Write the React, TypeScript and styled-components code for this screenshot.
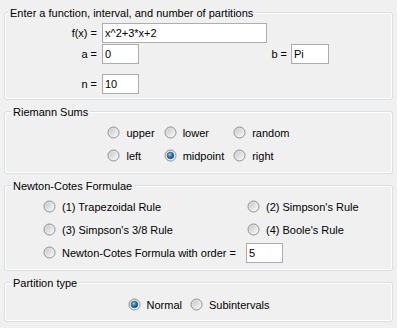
import React, { useId } from "react";
import styled, { createGlobalStyle } from "styled-components";

const GlobalStyle = createGlobalStyle`
	html, body {
		margin: 0;
		padding: 0;
		background: #f0f0f0;
	}
	body {
		font-family: "Liberation Sans", Arial, sans-serif;
		font-size: 11px;
		color: #000;
	}
`;

const Page = styled.div`
	width: 397px;
	height: 328px;
	box-sizing: border-box;
	padding: 12px 4px 0;
	display: flex;
	flex-direction: column;
	gap: 11px;
`;

const Group = styled.div<{ $pb: number }>`
	border: 1px solid #d5dfe5;
	border-radius: 3px;
	box-shadow: inset 0 0 0 1px #fff;
	padding-bottom: ${(p) => p.$pb}px;
`;

const Legend = styled.div<{ $indent: number }>`
	width: fit-content;
	margin: -6px 0 0 ${(p) => p.$indent}px;
	padding: 0 2px;
	background: #f0f0f0;
	line-height: 13px;
	white-space: nowrap;
`;

const FunctionGrid = styled.div`
	display: grid;
	grid-template-columns: 97px 37px 128px 24px 38px;
	grid-template-rows: 20px 20px 8px 20px;
	row-gap: 1px;
	margin-top: 3px;
`;

const Label = styled.span<{ $pr: number; $col: number; $row: number }>`
	grid-column: ${(p) => p.$col};
	grid-row: ${(p) => p.$row};
	align-self: center;
	text-align: right;
	padding-right: ${(p) => p.$pr}px;
	white-space: nowrap;
`;

const TextField = styled.input<{ $col: string; $row: number }>`
	grid-column: ${(p) => p.$col};
	grid-row: ${(p) => p.$row};
	box-sizing: border-box;
	width: 100%;
	height: 20px;
	margin: 0;
	padding: 0 2px;
	border: 1px solid #abadb3;
	background: #fff;
	font: inherit;
	color: #000;
	outline: none;
`;

const RiemannGrid = styled.div`
	display: grid;
	grid-template-columns: auto auto auto;
	justify-content: center;
	column-gap: 9px;
	row-gap: 2px;
	margin-top: 3px;
`;

const FormulaGrid = styled.div`
	display: grid;
	grid-template-columns: 204px auto;
	row-gap: 2px;
	margin-top: 3px;
	padding-left: 38px;
`;

const OrderRow = styled.div`
	grid-column: 1 / 3;
	display: flex;
	align-items: center;
	gap: 10px;
	height: 21px;
`;

const OrderField = styled.input`
	box-sizing: border-box;
	width: 37px;
	height: 20px;
	margin: 0;
	padding: 0 2px;
	border: 1px solid #abadb3;
	background: #fff;
	font: inherit;
	color: #000;
	outline: none;
`;

const PartitionRow = styled.div`
	display: flex;
	justify-content: center;
	gap: 8px;
	margin-top: 4px;
`;

const RadioLabel = styled.label`
	display: flex;
	align-items: center;
	gap: 6px;
	height: 21px;
	white-space: nowrap;
	cursor: default;
`;

const RadioIcon = ({ checked }: { checked?: boolean }) => {
	const id = useId().replace(/:/g, "");
	return (
		<svg width="13" height="13" viewBox="0 0 13 13">
			<defs>
				<linearGradient id={`ring${id}`} x1="0" y1="0" x2="1" y2="1">
					<stop offset="0" stopColor="#d2d2d2" />
					<stop offset="1" stopColor="#fbfbfb" />
				</linearGradient>
				<linearGradient id={`off${id}`} x1="0" y1="0" x2="1" y2="1">
					<stop offset="0" stopColor="#c9cbce" />
					<stop offset="1" stopColor="#f4f4f4" />
				</linearGradient>
				<radialGradient id={`on${id}`} cx="0.38" cy="0.35" r="0.7">
					<stop offset="0" stopColor="#8fd6f7" />
					<stop offset="0.45" stopColor="#2a86c4" />
					<stop offset="1" stopColor="#0b3d66" />
				</radialGradient>
			</defs>
			<circle cx="6.5" cy="6.5" r="5.5" fill={`url(#ring${id})`} stroke="#8e8f8f" />
			{checked ? (
				<circle cx="6.5" cy="6.5" r="3.3" fill={`url(#on${id})`} stroke="#1b4d78" strokeWidth="0.6" />
			) : (
				<circle cx="6.5" cy="6.5" r="3.5" fill={`url(#off${id})`} />
			)}
		</svg>
	);
};

const Radio = ({ label, checked }: { label: string; checked?: boolean }) => (
	<RadioLabel>
		<RadioIcon checked={checked} />
		<span>{label}</span>
	</RadioLabel>
);

export default function App() {
	return (
		<Page>
			<GlobalStyle />
			<Group $pb={5}>
				<Legend $indent={3}>Enter a function, interval, and number of partitions</Legend>
				<FunctionGrid>
					<Label $pr={5} $col={1} $row={1}>f(x) =</Label>
					<TextField $col="2 / 4" $row={1} defaultValue="x^2+3*x+2" />
					<Label $pr={5} $col={1} $row={2}>a =</Label>
					<TextField $col="2" $row={2} defaultValue="0" />
					<Label $pr={4} $col={4} $row={2}>b =</Label>
					<TextField $col="5" $row={2} defaultValue="Pi" />
					<Label $pr={5} $col={1} $row={4}>n =</Label>
					<TextField $col="2" $row={4} defaultValue="10" />
				</FunctionGrid>
			</Group>

			<Group $pb={7}>
				<Legend $indent={6}>Riemann Sums</Legend>
				<RiemannGrid>
					<Radio label="upper" />
					<Radio label="lower" />
					<Radio label="random" />
					<Radio label="left" />
					<Radio label="midpoint" checked />
					<Radio label="right" />
				</RiemannGrid>
			</Group>

			<Group $pb={7}>
				<Legend $indent={6}>Newton-Cotes Formulae</Legend>
				<FormulaGrid>
					<Radio label="(1) Trapezoidal Rule" />
					<Radio label="(2) Simpson's Rule" />
					<Radio label="(3) Simpson's 3/8 Rule" />
					<Radio label="(4) Boole's Rule" />
					<OrderRow>
						<Radio label="Newton-Cotes Formula with order =" />
						<OrderField defaultValue="5" />
					</OrderRow>
				</FormulaGrid>
			</Group>

			<Group $pb={6}>
				<Legend $indent={6}>Partition type</Legend>
				<PartitionRow>
					<Radio label="Normal" checked />
					<Radio label="Subintervals" />
				</PartitionRow>
			</Group>
		</Page>
	);
}
